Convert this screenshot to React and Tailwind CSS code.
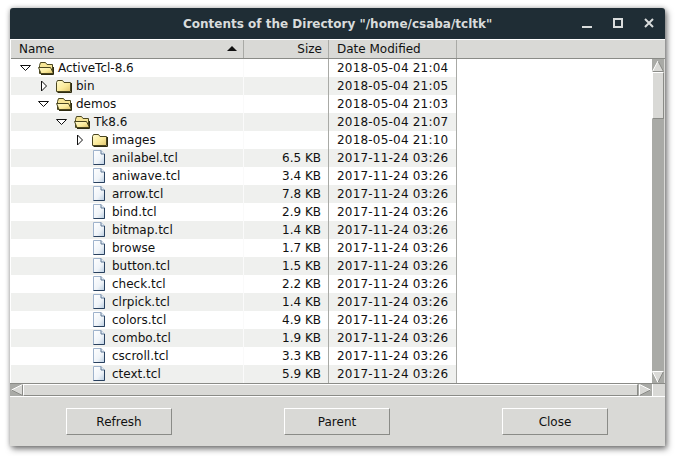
import React from 'react';

const rows = [
  { name: 'ActiveTcl-8.6', depth: 0, type: 'open', date: '2018-05-04 21:04' },
  { name: 'bin', depth: 1, type: 'closed', date: '2018-05-04 21:05' },
  { name: 'demos', depth: 1, type: 'open', date: '2018-05-04 21:03' },
  { name: 'Tk8.6', depth: 2, type: 'open', date: '2018-05-04 21:07' },
  { name: 'images', depth: 3, type: 'closed', date: '2018-05-04 21:10' },
  { name: 'anilabel.tcl', depth: 4, size: '6.5 KB', date: '2017-11-24 03:26' },
  { name: 'aniwave.tcl', depth: 4, size: '3.4 KB', date: '2017-11-24 03:26' },
  { name: 'arrow.tcl', depth: 4, size: '7.8 KB', date: '2017-11-24 03:26' },
  { name: 'bind.tcl', depth: 4, size: '2.9 KB', date: '2017-11-24 03:26' },
  { name: 'bitmap.tcl', depth: 4, size: '1.4 KB', date: '2017-11-24 03:26' },
  { name: 'browse', depth: 4, size: '1.7 KB', date: '2017-11-24 03:26' },
  { name: 'button.tcl', depth: 4, size: '1.5 KB', date: '2017-11-24 03:26' },
  { name: 'check.tcl', depth: 4, size: '2.2 KB', date: '2017-11-24 03:26' },
  { name: 'clrpick.tcl', depth: 4, size: '1.4 KB', date: '2017-11-24 03:26' },
  { name: 'colors.tcl', depth: 4, size: '4.9 KB', date: '2017-11-24 03:26' },
  { name: 'combo.tcl', depth: 4, size: '1.9 KB', date: '2017-11-24 03:26' },
  { name: 'cscroll.tcl', depth: 4, size: '3.3 KB', date: '2017-11-24 03:26' },
  { name: 'ctext.tcl', depth: 4, size: '5.9 KB', date: '2017-11-24 03:26' },
];

const FolderClosed = () => (
  <svg width="16" height="14" viewBox="0 0 16 14" className="shrink-0">
    <defs>
      <linearGradient id="fc" x1="0" y1="0" x2="1" y2="1">
        <stop offset="0" stopColor="#fffbd0" />
        <stop offset="0.55" stopColor="#fbeb9c" />
        <stop offset="1" stopColor="#e0c670" />
      </linearGradient>
    </defs>
    <path d="M0.5 3.5 L1.5 1.5 H6.5 L8 3.5 H14.5 V12.5 H0.5 Z" fill="url(#fc)" stroke="#4a4620" />
    <path d="M15.5 4 V13.5 H1.5" fill="none" stroke="#2e2b10" />
  </svg>
);

const FolderOpen = () => (
  <svg width="17" height="14" viewBox="0 0 17 14" className="shrink-0">
    <defs>
      <linearGradient id="fo" x1="0" y1="0" x2="1" y2="1">
        <stop offset="0" stopColor="#fffbd0" />
        <stop offset="0.55" stopColor="#fbeb9c" />
        <stop offset="1" stopColor="#d8bc64" />
      </linearGradient>
    </defs>
    <path d="M1.5 4.5 L2.5 1.5 H7.5 L9 3.5 H14.5 V12.5 H1.5 Z" fill="#f6e596" stroke="#4a4620" />
    <path d="M0.5 6.5 H12.5 L15.5 12.5 H3 Z" fill="url(#fo)" stroke="#4a4620" />
    <path d="M15.5 6 V13.5 H3" fill="none" stroke="#2e2b10" />
  </svg>
);

const FileIcon = () => (
  <svg width="14" height="16" viewBox="0 0 14 16" className="shrink-0">
    <defs>
      <linearGradient id="fi" x1="0" y1="0" x2="1" y2="1">
        <stop offset="0" stopColor="#ffffff" />
        <stop offset="0.6" stopColor="#eef3f8" />
        <stop offset="1" stopColor="#b8cce0" />
      </linearGradient>
    </defs>
    <path d="M1.5 0.5 H9 L12.5 4 V14.5 H1.5 Z" fill="url(#fi)" stroke="#9fb3cc" />
    <path d="M9 0.5 V4 H12.5" fill="#e4ecf4" stroke="#5f7896" />
    <path d="M12.5 4 V14.5 H1.5" fill="none" stroke="#28405e" />
  </svg>
);

const Arrow = ({ open }) => (
  <svg width="12" height="12" viewBox="0 0 12 12" className="shrink-0">
    {open ? (
      <path d="M0.5 3.5 H10.5 L5.5 8.5 Z" fill="#fff" stroke="#111" />
    ) : (
      <path d="M3.5 1 V11 L8.5 6 Z" fill="#fff" stroke="#111" />
    )}
  </svg>
);

// fill + white lit edge + grey shaded edge, like the old Tk scrollbar arrows
const arrowShapes = {
  up: { fill: 'M6 1 L11.5 11.5 H0.5 Z', lit: 'M6 1 L0.5 11.5', dark: 'M6 1 L11.5 11.5 H0.5' },
  down: { fill: 'M6 11.5 L0.5 0.5 H11.5 Z', lit: 'M0.5 0.5 H11.5 M0.5 0.5 L6 11.5', dark: 'M6 11.5 L11.5 0.5' },
  left: { fill: 'M0.5 6 L11.5 0.5 V11.5 Z', lit: 'M0.5 6 L11.5 0.5', dark: 'M0.5 6 L11.5 11.5 V0.5' },
  right: { fill: 'M11.5 6 L0.5 0.5 V11.5 Z', lit: 'M0.5 11.5 V0.5 L11.5 6', dark: 'M11.5 6 L0.5 11.5' },
};

const ScrollArrow = ({ dir }) => {
  const s = arrowShapes[dir];
  return (
    <svg width="12" height="12" viewBox="0 0 12 12" className="shrink-0" fill="none">
      <path d={s.fill} fill="#d9d9d6" />
      <path d={s.dark} stroke="#8a8b87" />
      <path d={s.lit} stroke="#fff" />
    </svg>
  );
};

const Row = ({ row, index }) => {
  const paddingLeft = 9 + row.depth * 18;
  return (
    <div className="flex h-[18px] w-full">
      <div className={`flex w-[446px] ${index % 2 ? 'bg-[#eff0ee]' : 'bg-white'}`}>
        <div className="flex w-[233px] items-center border-r border-[#fafafa]" style={{ paddingLeft }}>
          {row.type ? (
            <>
              <div className="w-[18px]">
                <Arrow open={row.type === 'open'} />
              </div>
              {row.type === 'open' ? <FolderOpen /> : <FolderClosed />}
              <span className={row.type === 'open' ? 'ml-[3px]' : 'ml-[4px]'}>{row.name}</span>
            </>
          ) : (
            <>
              <FileIcon />
              <span className="ml-[6px]">{row.name}</span>
            </>
          )}
        </div>
        <div className="flex w-[85px] items-center justify-end border-r border-[#a9aaa6] pr-[7px]">{row.size}</div>
        <div className="flex w-[128px] items-center border-r border-[#a9aaa6] pl-[8px] tracking-[0.2px] whitespace-nowrap">{row.date}</div>
      </div>
    </div>
  );
};

const Button = ({ children }) => (
  <button className="h-[27px] w-[106px] border border-t-white border-l-white border-r-[#8a8b87] border-b-[#8a8b87] bg-[#d9d9d6] text-[#111]">
    {children}
  </button>
);

function ScrollBarH() {
  return (
    <>
      <div className="flex w-[13px] shrink-0 items-center justify-end">
        <ScrollArrow dir="left" />
      </div>
      <div className="flex-1 border border-t-white border-l-white border-r-[#8a8b87] border-b-[#8a8b87] bg-[#d9d9d6]" />
      <div className="flex w-[14px] shrink-0 items-center justify-center">
        <ScrollArrow dir="right" />
      </div>
      <div className="w-[13px] shrink-0 border-l border-white bg-[#d9d9d6]" />
    </>
  );
}

export default function App() {
  return (
    <div className="h-[456px] w-[675px] overflow-hidden bg-white pl-[10px] pt-[8px] font-['DejaVu_Sans',sans-serif] text-[12px] text-[#111]">
      <div className="flex h-[438px] w-[655px] flex-col rounded-t-[3px] bg-[#d9d9d6] shadow-[0_0_5px_rgba(0,0,0,0.25),2px_3px_6px_rgba(0,0,0,0.5)]">
        <div className="flex h-[31px] shrink-0 items-center rounded-t-[3px] bg-[#1f2d35]">
          <div className="flex-1 pl-[173px] text-[12px] font-bold text-[#d9dcdc] whitespace-nowrap">
            Contents of the Directory "/home/csaba/tcltk"
          </div>
          <svg width="80" height="15" viewBox="0 0 80 15" className="mr-[6px] shrink-0" fill="none" stroke="#d9dcdc">
            <path d="M3 11 H13" strokeWidth="2" />
            <rect x="35" y="3" width="8" height="8" strokeWidth="2" />
            <path d="M66 3 L74 11 M74 3 L66 11" strokeWidth="2" />
          </svg>
        </div>

        <div className="flex h-[345px] shrink-0 flex-col border-b border-[#8a8b87] bg-white pl-[1px] pt-[1px]">
          <div className="flex h-[19px] shrink-0 border-b border-[#8a8b87] bg-[#d9d9d6]">
            <div className="flex w-[233px] items-center justify-between border-r border-[#a9aaa6] pl-[8px] pr-[6px]">
              <span>Name</span>
              <svg width="10" height="6" viewBox="0 0 10 6">
                <path d="M5 0 L10 5 H0 Z" fill="#111" />
              </svg>
            </div>
            <div className="flex w-[85px] items-center justify-end border-r border-[#a9aaa6] pr-[6px]">Size</div>
            <div className="flex w-[128px] items-center border-r border-[#a9aaa6] pl-[8px]">Date Modified</div>
            <div className="flex-1" />
          </div>

          <div className="flex min-h-0 flex-1">
            <div className="flex-1 overflow-hidden">
              {rows.map((row, i) => (
                <Row key={row.name} row={row} index={i} />
              ))}
            </div>
            <div className="flex w-[12px] shrink-0 flex-col bg-[#a9aaa6]">
              <div className="flex h-[13px] items-center justify-center">
                <ScrollArrow dir="up" />
              </div>
              <div className="h-[47px] border border-t-white border-l-white border-r-[#8a8b87] border-b-[#8a8b87] bg-[#d9d9d6]" />
              <div className="flex-1" />
              <div className="flex h-[13px] items-center justify-center">
                <ScrollArrow dir="down" />
              </div>
            </div>
            <div className="w-[1px] shrink-0 bg-[#d9d9d6]" />
          </div>
        </div>

        <div className="flex h-[13px] shrink-0 items-stretch border-b border-white bg-[#a9aaa6]">
          <ScrollBarH />
        </div>

        <div className="flex flex-1 items-start justify-between pl-[56px] pr-[57px] pt-[11px]">
          <Button>Refresh</Button>
          <Button>Parent</Button>
          <Button>Close</Button>
        </div>
      </div>
    </div>
  );
}
